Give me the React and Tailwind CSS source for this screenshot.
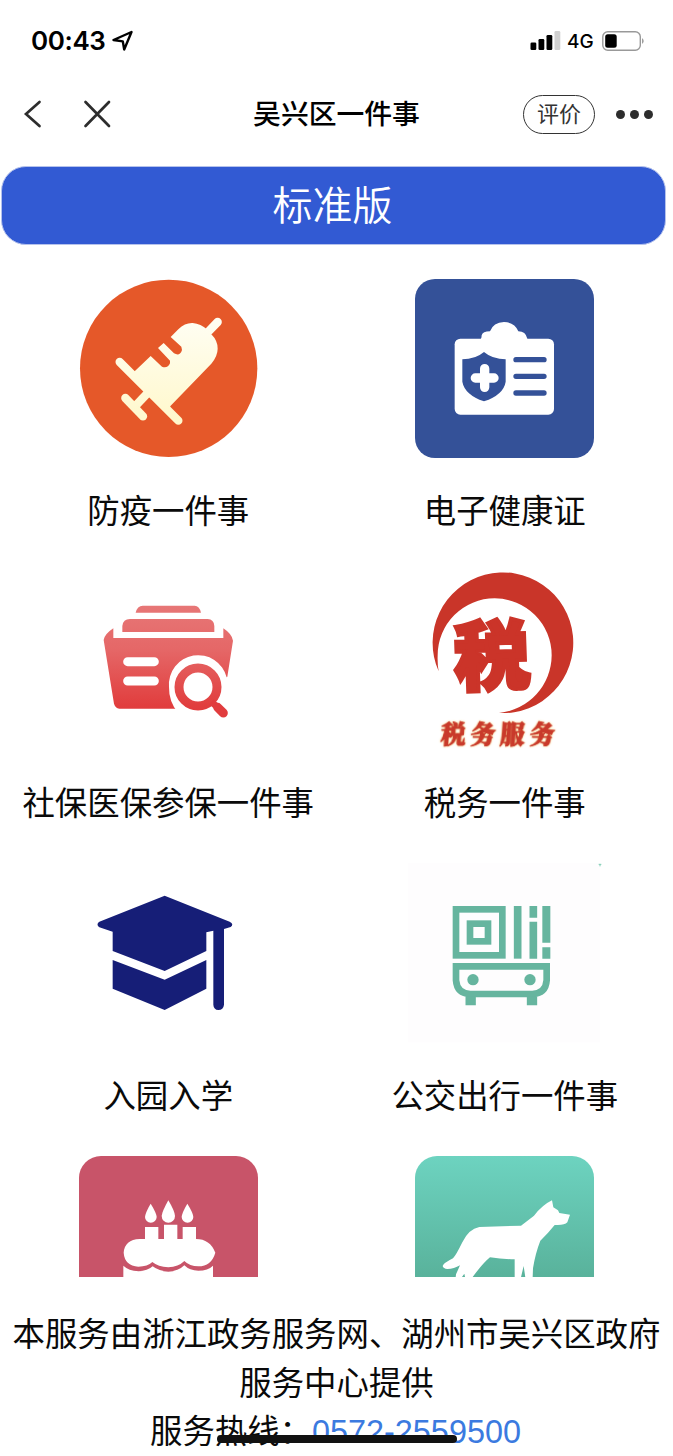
function VaccineIcon() {
    return (
        <svg viewBox="27 27 537 537" className="w-[179px] h-[179px]">
            <defs>
                <linearGradient id="cream" gradientUnits="userSpaceOnUse" x1="0" y1="156" x2="0" y2="452">
                    <stop offset="0" stopColor="#fffef2" />
                    <stop offset="1" stopColor="#fff8cc" />
                </linearGradient>
            </defs>
            <circle cx="296" cy="295" r="266" fill="#e55829" />
            <g fill="none" stroke="url(#cream)" strokeWidth="25" strokeLinecap="round">
                <path d="M418 182 L443 156" />
                <path d="M149 276 L325 452" />
                <path d="M166 384 L219 439" />
                <path d="M232 370 L200 404" strokeLinecap="butt" />
            </g>
            <path
                d="M194 304 L242 258 L276 290 Q293 296 300 280 L300 272 L264 234 L281 219 L312 250 Q330 260 336 240 L334 230 L302 201 L325 178 Q345 158 368 159 Q393 162 411 178 L424 193 Q443 212 443 236 Q443 258 424 281 L302 407 L294 420 L184 311 Z"
                fill="url(#cream)"
            />
        </svg>
    );
}

function HealthCardIcon() {
    return (
        <svg viewBox="31 27 537 537" className="w-[179px] h-[179px]">
            <rect x="31" y="27" width="537" height="537" rx="60" fill="#345198" />
            <rect x="150" y="206" width="298" height="228" rx="17" fill="#fff" />
            <path
                d="M222 215 Q231 208 231 196 Q234 184 256 184 Q266 157 298 156 Q330 157 341 184 Q363 184 368 206 L375 215 Z"
                fill="#fff"
            />
            <path
                d="M173 268 Q212 268 238 246 Q264 268 303 268 L303 335 Q297 374 238 394 Q180 374 173 335 Z"
                fill="#345198"
            />
            <path d="M240 296 V352 M212 324 H268" stroke="#fff" strokeWidth="28" strokeLinecap="round" />
            <path
                d="M334 269 H418 M334 319 H418 M334 369 H418"
                stroke="#345198"
                strokeWidth="16"
                strokeLinecap="round"
            />
        </svg>
    );
}

function FolderIcon() {
    return (
        <svg viewBox="-3 -57 537 537" className="w-[179px] h-[179px]">
            <defs>
                <linearGradient id="folder" gradientUnits="userSpaceOnUse" x1="0" y1="45" x2="0" y2="380">
                    <stop offset="0" stopColor="#e77777" />
                    <stop offset="0.4" stopColor="#e56767" />
                    <stop offset="0.9" stopColor="#e13e3e" />
                    <stop offset="1" stopColor="#e13a3c" />
                </linearGradient>
            </defs>
            <g fill="url(#folder)">
                <path d="M167 68 Q172 47 188 47 H344 Q358 47 363 68 Z" />
                <path d="M127 126 V108 Q129 87 150 87 H383 Q402 88 403 108 V126 Z" />
                <path d="M71 150 Q74 132 100 115 V144 H430 V115 Q456 132 459 152 L441 266 L437 356 H118 Q106 354 102 341 Z" />
            </g>
            <path
                d="M143 215 H223 M143 273 H223"
                stroke="#fff"
                strokeWidth="27"
                strokeLinecap="round"
            />
            <path d="M440 262 L470 250 V370 H295 Q266 335 267 291 A88 88 0 0 1 440 262 Z" fill="#fff" />
            <circle cx="354" cy="291" r="57" fill="none" stroke="url(#folder)" strokeWidth="27" />
            <path d="M394 336 L411 350" stroke="#e13c3e" strokeWidth="20" />
            <path d="M413 352 L430 369" stroke="#e13c3e" strokeWidth="27" strokeLinecap="round" />
        </svg>
    );
}

function TaxIcon() {
    return (
        <svg viewBox="15 33 537 537" className="w-[179px] h-[179px]">
            <path
                d="M86 334 A211 211 0 1 1 267 459 A175 175 0 0 0 425 286 A171 171 0 0 0 83 286 Q82 315 86 334 Z"
                fill="#c93529"
            />
            <text
                x="0"
                y="0"
                transform="translate(135 376) rotate(-2)"
                fontSize="228"
                fontWeight="900"
                fill="#cb3429"
                stroke="#cb3429"
                strokeWidth="11"
                className="font-['Noto_Sans_CJK_SC',sans-serif]"
            >
                税
            </text>
            <text
                x="0"
                y="0"
                transform="translate(91 550) skewX(-4)"
                fontSize="74"
                fontWeight="900"
                letterSpacing="15"
                fill="#c93a2b"
                stroke="#c93a2b"
                strokeWidth="3"
                className="font-['Noto_Serif_CJK_SC','Noto_Sans_CJK_SC',serif] drop-shadow-[0_0_3px_#f8dc8c]"
            >
                税务服务
            </text>
        </svg>
    );
}

function SchoolIcon() {
    return (
        <svg viewBox="-3 -48 537 537" className="w-[179px] h-[179px]">
            <g fill="#161e77">
                <path d="M254 47 L449 125 Q463 132 452 141 L432 147 V374 Q430 390 415 390 Q401 389 400 374 V152 L379 157 V213 L254 273 L98 213 V155 L58 142 Q47 133 58 125 Z" />
                <path d="M98 240 L254 299 L379 240 V326 L254 390 L98 326 Z" />
            </g>
        </svg>
    );
}

function BusIcon() {
    return (
        <svg viewBox="46 27 537 537" className="w-[179px] h-[179px] overflow-visible">
            <rect x="25" y="25" width="576" height="537" fill="#fefdfe" />
            <g fill="none" stroke="#66b59f">
                <rect x="169" y="163" width="139" height="138" strokeWidth="20" />
                <rect x="211" y="206" width="54" height="53" strokeWidth="20" />
                <path d="M354 153 V311" strokeWidth="23" />
                <path d="M401 153 V188 M401 200 V311" strokeWidth="23" />
                <path d="M440 153 V263 M440 277 V311" strokeWidth="24" />
                <path d="M169 334 H441 V376 Q438 416 398 417 H212 Q172 416 169 376 Z" strokeWidth="20" />
                <path d="M213 425 V451 M397 425 V451" strokeWidth="31" />
            </g>
            <circle cx="220" cy="374" r="17" fill="#66b59f" />
            <circle cx="391" cy="374" r="17" fill="#66b59f" />
            <path d="M597 28 H605 M601 28 V34" stroke="#7fcdb4" strokeWidth="3" />
        </svg>
    );
}

function CakeIcon() {
    return (
        <svg viewBox="57 48 537 537" className="w-[179px] h-[179px]">
            <rect x="57" y="48" width="537" height="537" rx="66" fill="#c85469" />
            <g fill="#fff">
                <path d="M272 191 Q289 218 290 231 A17 17 0 0 1 255 231 Q256 218 272 191 Z" />
                <path d="M325 181 Q344 213 345 228 A20 20 0 0 1 305 228 Q307 213 325 181 Z" />
                <path d="M382 191 Q399 218 400 231 A17 17 0 0 1 365 231 Q366 218 382 191 Z" />
                <path d="M255 261 H295 V297 H312 V254 H352 V297 H368 V261 H408 V297 Q450 297 466 338 Q454 379 415 379 Q389 379 373 363 Q355 381 325 382 Q294 380 277 366 Q263 380 235 380 Q194 377 191 338 Q194 299 239 297 H255 Z" />
                <path d="M190 377 Q206 392 235 394 Q263 393 278 379 Q297 394 325 395 Q355 394 373 376 Q389 392 415 392 Q444 392 459 377 V500 H190 Z" />
            </g>
        </svg>
    );
}

function DogIcon() {
    return (
        <svg viewBox="46 48 537 537" className="w-[179px] h-[179px]">
            <defs>
                <linearGradient id="mint" x1="0" y1="0" x2="0" y2="1">
                    <stop offset="0" stopColor="#6dd3c0" />
                    <stop offset="0.68" stopColor="#59b29b" />
                    <stop offset="1" stopColor="#4ea088" />
                </linearGradient>
            </defs>
            <rect x="46" y="48" width="537" height="537" rx="66" fill="url(#mint)" />
            <path
                d="M457 181 L461 202 L475 211 L479 219 L511 224 L503 247 Q494 257 465 255 Q446 279 422 302 Q407 340 400 385 L398 440 H381 L372 378 L362 420 V440 H345 V358 Q307 357 271 352 Q248 371 219 411 L212 440 H202 L194 401 L187 411 L180 440 H165 L169 403 L181 376 Q163 387 143 387 Q131 386 129 378 Q132 369 160 355 Q169 346 188 307 Q207 267 239 261 L364 257 L403 227 Q428 195 457 181 Z"
                fill="#fff"
            />
        </svg>
    );
}

const services = [
    { id: 1, name: "防疫一件事", icon: VaccineIcon },
    { id: 2, name: "电子健康证", icon: HealthCardIcon },
    { id: 3, name: "社保医保参保一件事", icon: FolderIcon },
    { id: 4, name: "税务一件事", icon: TaxIcon },
    { id: 5, name: "入园入学", icon: SchoolIcon },
    { id: 6, name: "公交出行一件事", icon: BusIcon },
    { id: 7, icon: CakeIcon },
    { id: 8, icon: DogIcon },
];

function StatusBar() {
    return (
        <div className="flex h-20 items-center justify-between pl-[31px] pr-[27px] pt-px font-[Inter,sans-serif] text-black">
            <div className="flex items-center gap-[7px]">
                <span className="text-[26px] font-semibold leading-none tracking-[-0.4px]">00:43</span>
                <svg viewBox="0 0 22 22" className="h-[22px] w-[22px]">
                    <path
                        d="M1.5 10 L19.5 2 L12.2 19.5 L10.8 11.4 Z"
                        fill="none"
                        stroke="#000"
                        strokeWidth="2.4"
                        strokeLinejoin="round"
                    />
                </svg>
            </div>
            <div className="flex items-center">
                <svg viewBox="0 0 31 19" className="h-[19px] w-[31px]">
                    <rect x="0.5" y="11.5" width="5.8" height="7.5" rx="1.3" />
                    <rect x="8.5" y="8" width="5.8" height="11" rx="1.3" />
                    <rect x="16.5" y="4" width="5.8" height="15" rx="1.3" />
                    <rect x="24.5" y="0" width="5.8" height="19" rx="1.3" fill="#d0d0d0" />
                </svg>
                <span className="ml-[6px] mt-0.5 w-[35px] text-[19px] font-medium leading-none">4G</span>
                <svg viewBox="0 0 44 20" className="h-5 w-11">
                    <rect x="0.8" y="0.8" width="37.5" height="18.4" rx="5" fill="none" stroke="#999" strokeWidth="1.4" />
                    <rect x="3.2" y="3.2" width="11.5" height="13.6" rx="2.5" />
                    <path d="M40.2 7 Q43 10 40.2 13 Z" fill="#888" />
                </svg>
            </div>
        </div>
    );
}

function NavBar() {
    return (
        <div className="grid h-[68px] grid-cols-[1fr_auto_1fr] items-center pl-[22px] pr-5">
            <div className="flex items-center gap-[41px]">
                <svg viewBox="0 0 20 28" className="h-7 w-5">
                    <path d="M17.5 2 L4 14 L17.5 26" fill="none" stroke="#2d2d2d" strokeWidth="2.7" strokeLinecap="round" />
                </svg>
                <svg viewBox="0 0 28 28" className="h-7 w-7">
                    <path d="M2.5 2 L26 26 M26 2 L2.5 26" stroke="#2d2d2d" strokeWidth="2.7" strokeLinecap="round" />
                </svg>
            </div>
            <h1 className="pb-[3px] pr-[2px] text-[27.8px] font-medium leading-none text-black">吴兴区一件事</h1>
            <div className="flex items-center justify-end gap-[21px]">
                <button className="h-[39px] w-[72px] rounded-full border-[1.5px] border-[#333] pb-[5px] text-[22px] leading-none text-[#333]">
                    评价
                </button>
                <div className="flex gap-[5px]">
                    <i className="h-[9px] w-[9px] rounded-full bg-[#2d2d2d]" />
                    <i className="h-[9px] w-[9px] rounded-full bg-[#2d2d2d]" />
                    <i className="h-[9px] w-[9px] rounded-full bg-[#2d2d2d]" />
                </div>
            </div>
        </div>
    );
}

function App() {
    return (
        <div className="relative h-[1456px] w-[673px] overflow-hidden bg-white font-['Noto_Sans_CJK_SC',sans-serif] text-[#0a0a0a]">
            <StatusBar />
            <NavBar />

            <button className="ml-px mt-[18px] flex h-[79px] w-[665px] items-center justify-center rounded-[25px] border border-[#b5c2ec] bg-[#325ad3] pb-[5px] pr-0.5 text-[40px] font-[350] leading-none text-white">
                标准版
            </button>

            <div className="mt-[34px] h-[998px] overflow-hidden">
                <div className="grid w-[673px] grid-cols-2">
                    {services.map(({ id, name, icon: Icon }) => (
                        <div key={id} className="flex h-[292.4px] flex-col items-center">
                            <Icon />
                            {name && (
                                <p className="mt-[27px] whitespace-nowrap text-[32.4px] leading-[48px]">{name}</p>
                            )}
                        </div>
                    ))}
                </div>
            </div>

            <footer className="mt-[31px] text-center text-[32.4px] leading-[48.5px]">
                <p>本服务由浙江政务服务网、湖州市吴兴区政府</p>
                <p>服务中心提供</p>
                <p className="pr-0.5">
                    服务热线：
                    <a className="font-['Liberation_Sans',sans-serif] text-[#3b7ae0]">0572-2559500</a>
                </p>
            </footer>

            {/* home indicator */}
            <div className="absolute left-[217px] top-[1435px] h-2 w-60 rounded-full bg-[#111]" />
        </div>
    );
}

export default App;
